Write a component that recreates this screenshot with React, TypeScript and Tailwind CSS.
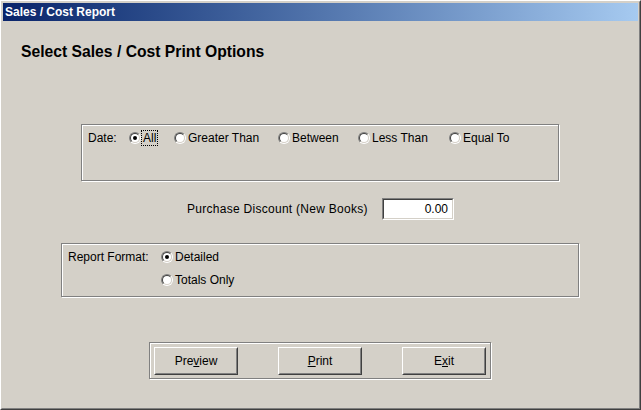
import React from 'react';

function Radio({ label, checked, focus }: { label: string; checked?: boolean; focus?: boolean }) {
    return (
        <div className="flex items-center">
            <span className="flex w-[12px] h-[12px] rounded-full border border-t-[#808080] border-l-[#808080] border-r-white border-b-white">
                <span className="flex flex-1 items-center justify-center rounded-full border border-t-[#404040] border-l-[#404040] border-r-[#d4d0c8] border-b-[#d4d0c8] bg-white">
                    {checked && <span className="w-[4px] h-[4px] rounded-full bg-black" />}
                </span>
            </span>
            {focus ? (
                <span className="border border-dotted border-black pl-[1px] pr-[1px] leading-[14px]">{label}</span>
            ) : (
                <span className="ml-[2px] leading-[14px]">{label}</span>
            )}
        </div>
    );
}

function Button({ children }: { children: React.ReactNode }) {
    return (
        <div className="flex w-[84px] h-[28px] border border-t-white border-l-white border-r-[#404040] border-b-[#404040]">
            <div className="flex flex-1 items-center justify-center border border-t-[#d4d0c8] border-l-[#d4d0c8] border-r-[#808080] border-b-[#808080]">
                {children}
            </div>
        </div>
    );
}

export default function App() {
    return (
        <div className="w-[641px] h-[410px] bg-[#d4d0c8] text-black text-[12px] font-['Liberation_Sans',Arial,sans-serif] border border-t-white border-l-white border-r-[#404040] border-b-[#404040]">
            <div className="h-full border border-t-[#d4d0c8] border-l-[#d4d0c8] border-r-[#808080] border-b-[#808080] p-[1px] flex flex-col">
                {/* Title bar */}
                <div className="h-[18px] flex items-center pl-[2px] bg-gradient-to-r from-[#0a246a] to-[#a6caf0] text-white font-bold text-[12px] leading-[18px]">
                    Sales / Cost Report
                </div>

                {/* Heading */}
                <div className="mt-[22px] ml-[18px] font-bold text-[15.7px] leading-[18px]">
                    Select Sales / Cost Print Options
                </div>

                {/* Date options */}
                <div className="mt-[63px] ml-[78px] w-[478px] h-[57px] border border-[#808080] shadow-[1px_1px_0_#fff,inset_1px_1px_0_#fff]">
                    <div className="flex items-center h-[16px] mt-[5px] pl-[6px]">
                        <span className="w-[41px] leading-[14px]">Date:</span>
                        <div className="w-[45px]"><Radio label="All" checked focus /></div>
                        <div className="w-[104px]"><Radio label="Greater Than" /></div>
                        <div className="w-[80px]"><Radio label="Between" /></div>
                        <div className="w-[91px]"><Radio label="Less Than" /></div>
                        <div><Radio label="Equal To" /></div>
                    </div>
                </div>

                {/* Purchase discount */}
                <div className="mt-[17px] ml-[184px] flex items-center">
                    <span className="w-[195px] leading-[14px] tracking-[0.28px]">Purchase Discount (New Books)</span>
                    <div className="flex w-[72px] h-[22px] border border-t-[#808080] border-l-[#808080] border-r-white border-b-white">
                        <div className="flex flex-1 items-center justify-end pr-[4px] bg-white border border-t-[#404040] border-l-[#404040] border-r-[#d4d0c8] border-b-[#d4d0c8]">
                            0.00
                        </div>
                    </div>
                </div>

                {/* Report format */}
                <div className="mt-[23px] ml-[58px] w-[518px] h-[54px] border border-[#808080] shadow-[1px_1px_0_#fff,inset_1px_1px_0_#fff]">
                    <div className="flex pt-[6px] pl-[6px]">
                        <span className="w-[93px] leading-[14px]">Report Format:</span>
                        <div className="flex flex-col gap-[9px]">
                            <Radio label="Detailed" checked />
                            <Radio label="Totals Only" />
                        </div>
                    </div>
                </div>

                {/* Buttons */}
                <div className="mt-[45px] ml-[146px] w-[342px] h-[37px] border border-[#808080] shadow-[1px_1px_0_#fff,inset_1px_1px_0_#fff] pt-[4px] pl-[4px] flex gap-[40px]">
                    <Button>Pre<u>v</u>iew</Button>
                    <Button><u>P</u>rint</Button>
                    <Button>E<u>x</u>it</Button>
                </div>
            </div>
        </div>
    );
}
